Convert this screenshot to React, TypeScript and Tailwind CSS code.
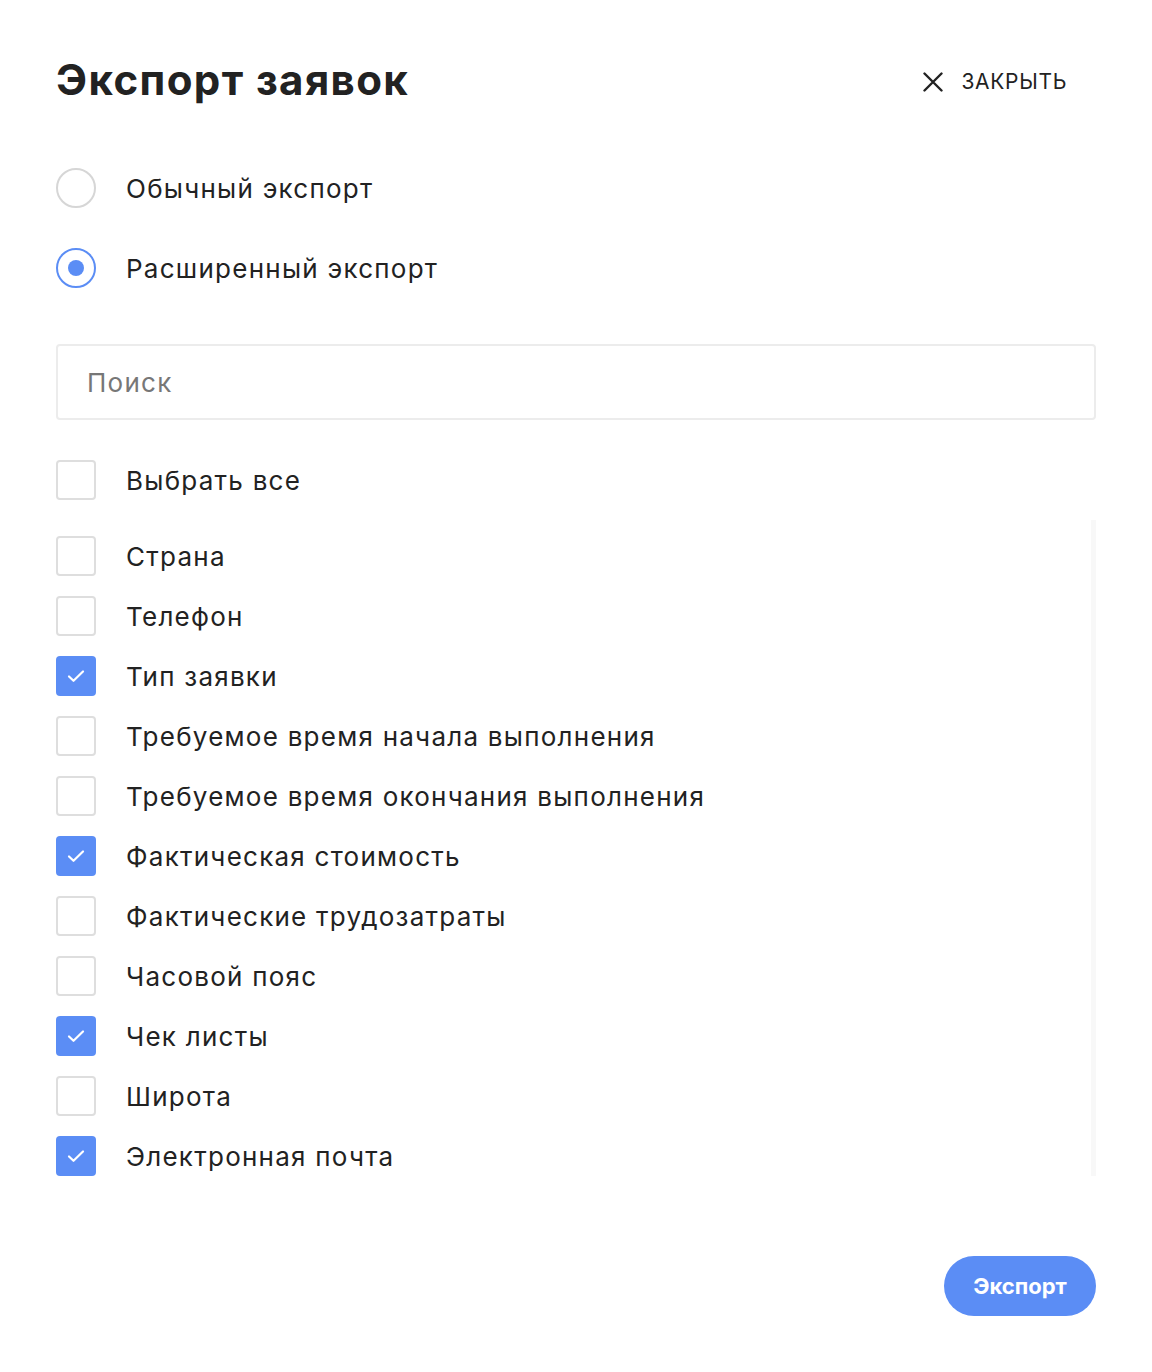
import { useState } from 'react'

const fields = [
  { label: 'Страна', checked: false },
  { label: 'Телефон', checked: false },
  { label: 'Тип заявки', checked: true },
  { label: 'Требуемое время начала выполнения', checked: false },
  { label: 'Требуемое время окончания выполнения', checked: false },
  { label: 'Фактическая стоимость', checked: true },
  { label: 'Фактические трудозатраты', checked: false },
  { label: 'Часовой пояс', checked: false },
  { label: 'Чек листы', checked: true },
  { label: 'Широта', checked: false },
  { label: 'Электронная почта', checked: true },
]

function Checkbox({ checked }: { checked: boolean }) {
  return checked ? (
    <div className="w-10 h-10 rounded-[4px] bg-[#5b8df5] flex items-center justify-center shrink-0">
      <svg width="20" height="20" viewBox="0 0 20 20" fill="none">
        <path d="M3 10.5l4.5 4.3L17 5.5" stroke="white" strokeWidth="2.2" strokeLinecap="round" strokeLinejoin="round" />
      </svg>
    </div>
  ) : (
    <div className="w-10 h-10 rounded-[4px] border-2 border-[#dedede] bg-white shrink-0" />
  )
}

function Radio({ checked }: { checked: boolean }) {
  return checked ? (
    <div className="w-10 h-10 rounded-full border-2 border-[#5b8df5] flex items-center justify-center shrink-0">
      <div className="w-4 h-4 rounded-full bg-[#5b8df5]" />
    </div>
  ) : (
    <div className="w-10 h-10 rounded-full border-2 border-[#d6d6d6] shrink-0" />
  )
}

export default function App() {
  const [mode, setMode] = useState('extended')
  const [items, setItems] = useState(fields)
  const [query, setQuery] = useState('')

  const toggle = (i: number) => {
    setItems(items.map((it, idx) => (idx === i ? { ...it, checked: !it.checked } : it)))
  }

  return (
    <main className="min-h-screen bg-white text-[#222] font-['Inter',sans-serif] px-14 pt-[50px] pb-14">
      <div className="flex items-center justify-between">
        <h1 className="text-[42px] font-bold tracking-[1.4px] leading-[60px]">Экспорт заявок</h1>
        <button className="flex items-center gap-[18px] mr-[29px] mt-[4px] text-[21px] tracking-[0.7px] text-[#222]">
          <svg width="20" height="20" viewBox="0 0 20 20" fill="none">
            <path d="M1.5 1.5l17 17M18.5 1.5l-17 17" stroke="#222" strokeWidth="2.4" strokeLinecap="round" />
          </svg>
          ЗАКРЫТЬ
        </button>
      </div>

      <div className="mt-[58px] flex flex-col gap-10 text-[26px] tracking-[1.25px]">
        <label className="flex items-center gap-[30px] cursor-pointer" onClick={() => setMode('normal')}>
          <Radio checked={mode === 'normal'} />
          <span>Обычный экспорт</span>
        </label>
        <label className="flex items-center gap-[30px] cursor-pointer" onClick={() => setMode('extended')}>
          <Radio checked={mode === 'extended'} />
          <span>Расширенный экспорт</span>
        </label>
      </div>

      <input
        value={query}
        onChange={(e) => setQuery(e.target.value)}
        placeholder="Поиск"
        className="mt-[56px] w-full h-[76px] border-2 border-[#ececec] rounded-[4px] px-[29px] text-[26px] tracking-[1.25px] placeholder:text-[#777] outline-none"
      />

      <div className="mt-10 flex items-center gap-[30px] text-[26px] tracking-[1.25px]">
        <Checkbox checked={false} />
        <span>Выбрать все</span>
      </div>

      <div className="mt-9 flex">
        <div className="flex-1 flex flex-col gap-5 text-[26px] tracking-[1.25px]">
          {items
            .filter((it) => it.label.toLowerCase().includes(query.toLowerCase()))
            .map((it, i) => (
              <div key={it.label} className="flex items-center gap-[30px] cursor-pointer" onClick={() => toggle(i)}>
                <Checkbox checked={it.checked} />
                <span>{it.label}</span>
              </div>
            ))}
        </div>
        <div className="w-[5px] -mt-4 bg-[#f8f8f8]" />
      </div>

      <div className="mt-20 flex justify-end">
        <button className="w-[152px] h-[60px] rounded-full bg-[#5b8df5] text-white text-[22px] font-bold">
          Экспорт
        </button>
      </div>
    </main>
  )
}
